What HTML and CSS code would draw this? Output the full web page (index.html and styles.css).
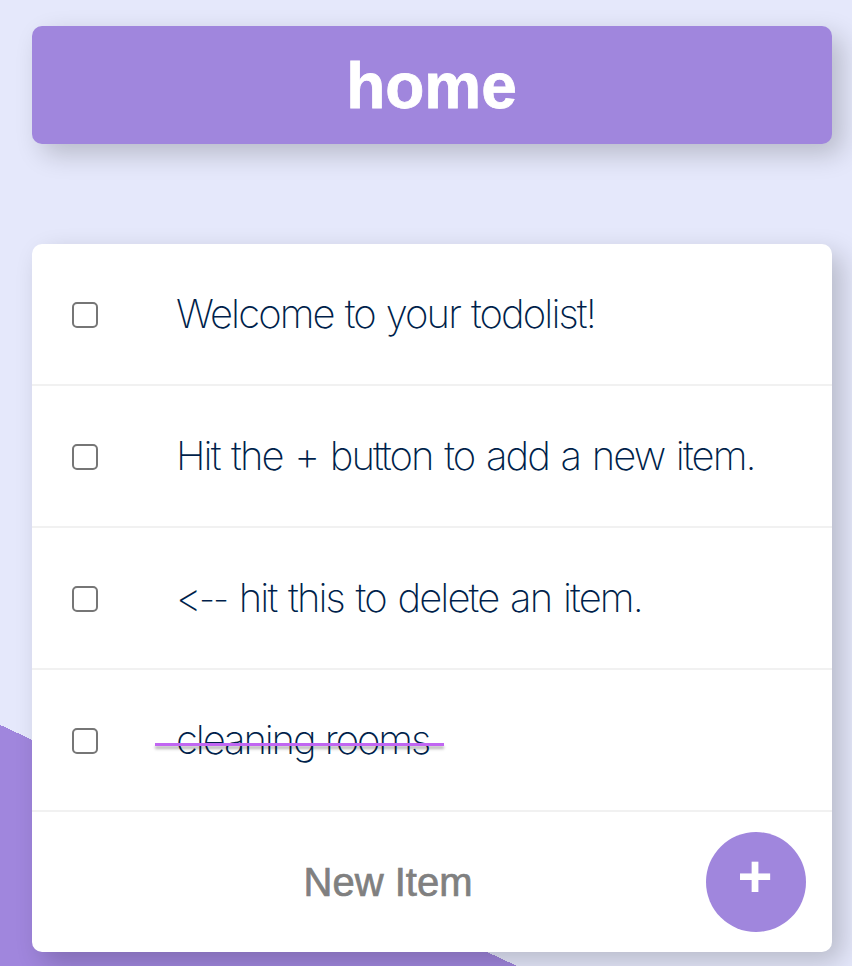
FILE: index.html
```html
<!DOCTYPE html>
<html lang="en">
<head>
<meta charset="utf-8">
<title>To Do List</title>
<link rel="stylesheet" href="styles.css">
</head>
<body>
<header class="box heading"><h1>home</h1></header>
<main class="box list">
  <div class="item"><input type="checkbox" aria-label="Welcome"><p class="welcome">Welcome to your todolist!</p></div>
  <div class="item"><input type="checkbox" aria-label="Add"><p class="add-tip">Hit the + button to add a new item.</p></div>
  <div class="item"><input type="checkbox" aria-label="Delete"><p class="delete-tip"><span class="arrow">&lt;<span class="dashes">--</span></span> hit this to delete an item.</p></div>
  <div class="item"><input type="checkbox" aria-label="Cleaning"><p class="done">cleaning rooms</p></div>
  <form class="new-item">
    <input type="text" placeholder="New Item" autocomplete="off">
    <button type="button">+</button>
  </form>
</main>
</body>
</html>
```
FILE: styles.css
```css
* { box-sizing: border-box; }
html { background: #e5e8fb; }
body {
  margin: 0;
  height: 966px;
  padding: 26px 20px 14px 32px;
  overflow: hidden;
  font-family: "Liberation Sans", Arial, sans-serif;
  background: linear-gradient(25deg, #a086dd 50%, #e5e8fb 50%) 0 0 / 100% 1847px no-repeat;
}
.box {
  border-radius: 10px;
  box-shadow: 10px 10px 27px rgba(0, 0, 0, 0.2);
}
.heading {
  height: 118px;
  margin-bottom: 100px;
  padding: 2px 1px 0 0;
  display: flex;
  align-items: center;
  justify-content: center;
  background: #a086dd;
}
h1 { margin: 0; font-size: 64px; line-height: 74px; color: #fff; -webkit-text-stroke: 0.8px #fff; }
.list { height: 708px; background: #fff; }
.item {
  height: 142px;
  display: flex;
  align-items: center;
  padding-left: 40px;
  border-bottom: 2px solid #f1f1f1;
}
.item input {
  appearance: none;
  width: 26px;
  height: 26px;
  margin: 2px 57px 0 0;
  border: 2px solid #767676;
  border-radius: 5px;
  background: #fff;
}
.item p {
  position: relative;
  margin: 0;
  padding: 0 21px;
  font-family: Inter, "Liberation Sans", sans-serif;
  font-size: 40px;
  font-weight: 200;
  line-height: 48px;
  white-space: nowrap;
  color: #001f4b;
  font-feature-settings: "calt" 0;
  letter-spacing: -1.9px;
  word-spacing: 2.2px;
}
.item .welcome { word-spacing: 1.6px; }
.item .delete-tip { word-spacing: 2.4px; }
.item .arrow { letter-spacing: -2.9px; }
.item .dashes { font-size: 36px; letter-spacing: -2px; }
.item .done { letter-spacing: -2.1px; word-spacing: 1px; }
.item .done::after {
  content: "";
  position: absolute;
  left: 0;
  top: 27px;
  width: 289px;
  height: 3px;
  background: #c166f2;
  box-shadow: 0 3px 3px rgba(0, 0, 0, 0.3);
}
.new-item { height: 140px; display: flex; align-items: center; }
.new-item input {
  width: 674px;
  height: 80px;
  padding: 0 0 0 38px;
  border: 0;
  background: transparent;
  font: 40px "Liberation Sans", Arial, sans-serif;
  text-align: center;
}
.new-item input::placeholder { color: #808080; opacity: 1; -webkit-text-stroke: 0.7px #808080; }
.new-item button {
  width: 100px;
  height: 100px;
  padding: 0 2px 10px 0;
  border: 0;
  border-radius: 50%;
  background: #a086dd;
  color: #fff;
  font: bold 60px/80px "Liberation Sans", Arial, sans-serif;
}
```
